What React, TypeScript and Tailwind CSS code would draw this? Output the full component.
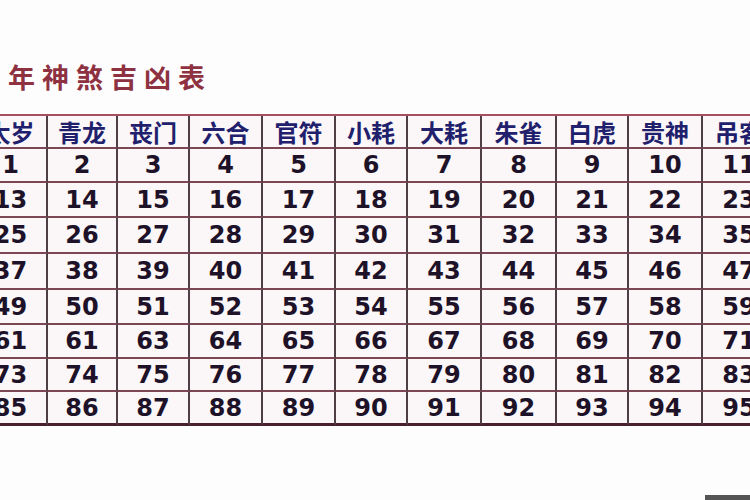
const gods = ["太岁", "青龙", "丧门", "六合", "官符", "小耗", "大耗", "朱雀", "白虎", "贵神", "吊客", "病符"];

const rows = [
  ["1", "2", "3", "4", "5", "6", "7", "8", "9", "10", "11", "12"],
  ["13", "14", "15", "16", "17", "18", "19", "20", "21", "22", "23", "24"],
  ["25", "26", "27", "28", "29", "30", "31", "32", "33", "34", "35", "36"],
  ["37", "38", "39", "40", "41", "42", "43", "44", "45", "46", "47", "48"],
  ["49", "50", "51", "52", "53", "54", "55", "56", "57", "58", "59", "60"],
  ["61", "61", "63", "64", "65", "66", "67", "68", "69", "70", "71", "72"],
  ["73", "74", "75", "76", "77", "78", "79", "80", "81", "82", "83", "84"],
  ["85", "86", "87", "88", "89", "90", "91", "92", "93", "94", "95", "96"],
];

export default function App() {
  return (
    <div className="relative w-[750px] h-[500px] overflow-hidden bg-[#fdfdfd]">
      {/* title */}
      <div className="h-[114px] pt-[61px] ml-[-26px] whitespace-nowrap">
        <span className="text-[27px] leading-[32px] tracking-[7px] font-bold text-[#8e3242] font-['Noto_Sans_CJK_SC',serif]">
          二年神煞吉凶表
        </span>
      </div>

      {/* table */}
      <div className="ml-[-25px] w-[850px] grid grid-cols-[73px_70px_72px_73px_73px_72px_74px_75px_72px_74px_74px_74px] grid-rows-[33px_34px_35px_36px_36px_35px_34px_33px_34px] border-t-2 border-[#a4505e] bg-[#fbf6f8] font-['DejaVu_Sans','Noto_Sans_CJK_SC',sans-serif] font-bold">
        {gods.map((g) => (
          <div
            key={g}
            className="flex items-center justify-center border-r-2 border-b-2 border-r-[#4e3e46] border-b-[#7c4654] text-[24px] text-[#20206c] font-['Noto_Sans_CJK_SC',sans-serif]"
          >
            {g}
          </div>
        ))}
        {rows.map((r, i) =>
          r.map((n, j) => (
            <div
              key={i + "-" + j}
              className={
                "flex items-center justify-center border-r-2 border-r-[#4e3e46] text-[24px] text-[#1e1228] " +
                (i === rows.length - 1 ? "border-b-[3px] border-b-[#4a2030]" : "border-b-2 border-b-[#7c4654]")
              }
            >
              {n}
            </div>
          ))
        )}
      </div>

      <div className="absolute bottom-0 right-0 w-[45px] h-[5px] bg-[#555555]" />
    </div>
  );
}
